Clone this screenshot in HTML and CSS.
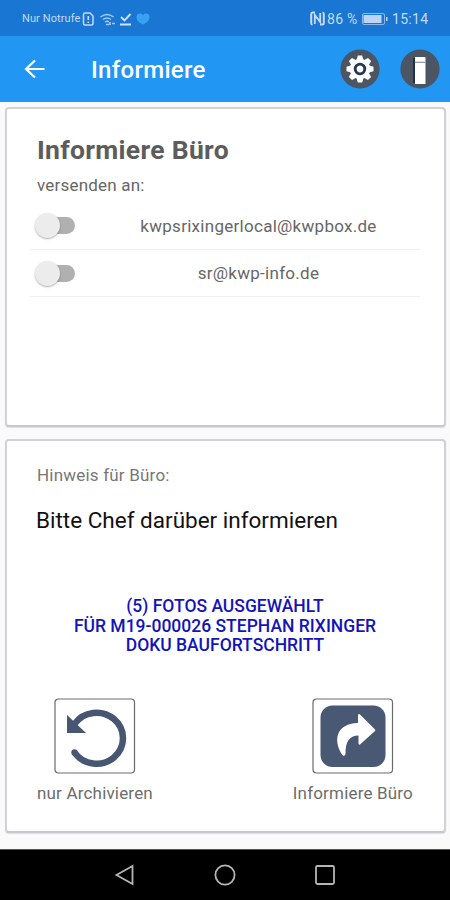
FILE: index.html
```
<!DOCTYPE html>
<html lang="de">
<head>
    <meta charset="UTF-8">
    <meta name="viewport" content="width=device-width, initial-scale=1.0">
    <title>Informiere Büro</title>
    <link rel="stylesheet" href="styles.css">
</head>
<body>
    <div class="statusbar">
        <span class="network">Nur Notrufe</span>
        <svg class="status-icons" width="70" height="16" viewBox="0 0 70 16">
            <path d="M4 2h5l3 3v7.500q0 1.500-1.500 1.500h-6.500q-1.500 0-1.500-1.500v-9q0-1.500 1.500-1.500z" fill="none" stroke="#c5daf3" stroke-width="1.500"/>
            <path d="M7.300 5v4M7.300 10.500v1.500" stroke="#c5daf3" stroke-width="1.600"/>
            <path d="M19.500 6q6.500-5 13 0M22 8.500q4-3 8 0M24 11q2-1.500 4 0" fill="none" stroke="#a9cbf0" stroke-width="1.400"/>
            <path d="M25 13.500h3M29 11v3M31 12.500h3" stroke="#a9cbf0" stroke-width="1.600"/>
            <path d="M40 6l3.500 3.500L49.500 3M39 13.500h11" fill="none" stroke="#d3e3f6" stroke-width="1.900"/>
            <path d="M62 13.500c-4-2-6.500-4-6.500-7.500 0-4 5-4.500 6.500-1.500 1.500-3 6.500-2.500 6.500 1.500 0 3.500-2.500 5.500-6.500 7.500z" fill="#3aa0f2"/>
        </svg>
        <svg class="nfc" width="15" height="15" viewBox="0 0 15 15">
            <path d="M5 1.500H2.500Q1.200 1.500 1.200 3v9q0 1.500 1.300 1.500M10 13.500h2.500q1.300 0 1.300-1.500V3q0-1.500-1.300-1.500" fill="none" stroke="#c5daf3" stroke-width="2"/>
            <path d="M4.800 13V4l5.400 7V2" fill="none" stroke="#c5daf3" stroke-width="1.800"/>
        </svg>
        <span class="percent">86 %</span>
        <svg class="battery" width="26" height="12" viewBox="0 0 26 12">
            <rect x="0.500" y="0.500" width="22" height="11" rx="1.500" fill="none" stroke="#8ab6e8"/>
            <rect x="1.500" y="2" width="18" height="8" fill="#bcd5f2"/>
            <rect x="24" y="4" width="1.500" height="4" fill="#bcd5f2"/>
        </svg>
        <span class="clock">15:14</span>
    </div>

    <header class="toolbar">
        <svg class="back" width="22" height="20" viewBox="0 0 22 20">
            <path d="M11 1.500L2 10l9 8.500M2 10h18.500" fill="none" stroke="#fff" stroke-width="2.200"/>
        </svg>
        <h1>Informiere</h1>
        <svg class="tool" width="40" height="40" viewBox="-20 -20 40 40">
            <circle r="19.600" fill="#4b5563"/>
            <g fill="#fff">
                <circle r="10.200"/>
                <path id="tooth" d="M-3.500-9l1.300-4.500h4.400L3.500-9v18l-1.300 4.500h-4.400L-3.500 9z"/>
                <use href="#tooth" transform="rotate(45)"/>
                <use href="#tooth" transform="rotate(90)"/>
                <use href="#tooth" transform="rotate(135)"/>
            </g>
            <circle r="4.800" fill="#fff" stroke="#26364e" stroke-width="2.800"/>
        </svg>
        <svg class="tool" width="40" height="40" viewBox="-20 -20 40 40">
            <circle r="19.600" fill="#4b5563"/>
            <path d="M-7-11h3v25h-3z" fill="#22314a"/>
            <path d="M-5-12h10.500v27H-5z" fill="#fff"/>
            <path d="M-5-6.700H5.500" stroke="#8b929c" stroke-width="1.200"/>
        </svg>
    </header>

    <main>
        <section class="card recipients">
            <h2>Informiere Büro</h2>
            <p class="label">versenden an:</p>
            <div class="row">
                <span class="switch"></span>
                <span class="mail">kwpsrixingerlocal@kwpbox.de</span>
            </div>
            <div class="row">
                <span class="switch"></span>
                <span class="mail">sr@kwp-info.de</span>
            </div>
        </section>

        <section class="card message">
            <p class="label hint">Hinweis für Büro:</p>
            <p class="note">Bitte Chef darüber informieren</p>
            <p class="photos">
                (5) FOTOS AUSGEWÄHLT<br>
                FÜR M19-000026 STEPHAN RIXINGER<br>
                DOKU BAUFORTSCHRITT
            </p>
            <div class="actions">
                <div class="action">
                    <svg width="82" height="76" viewBox="0 0 82 76">
                        <rect x="1" y="1" width="79.500" height="74" rx="3.500" fill="#fff" stroke="#6a6a6a" stroke-width="1.200"/>
                        <path d="M20.500 26A26.500 25.500 0 1 1 20.500 54.500" fill="none" stroke="#475772" stroke-width="6.500"/>
                        <circle cx="20.500" cy="54.500" r="3.200" fill="#475772"/>
                        <path d="M13 17L32 35H13z" fill="#475772"/>
                    </svg>
                    <span class="caption">nur Archivieren</span>
                </div>
                <div class="action">
                    <svg width="82" height="76" viewBox="0 0 82 76">
                        <rect x="1" y="1" width="79.500" height="74" rx="3.500" fill="#fff" stroke="#6a6a6a" stroke-width="1.200"/>
                        <rect x="8.500" y="7.500" width="65" height="61.500" rx="12" fill="#4a5973"/>
                        <path d="M46 16.500q1-1 2 0L63 31.500q.800.800 0 1.600L48 46.500q-1.500.500-1.500-1V37.500C37 37.500 33.500 44 33.500 56q-.500 2.500-2.700 1.500C21 44 23 25.500 46 25z" fill="#fff"/>
                    </svg>
                    <span class="caption">Informiere Büro</span>
                </div>
            </div>
        </section>
    </main>

    <nav class="navbar">
        <svg width="22" height="22" viewBox="0 0 22 22">
            <path d="M18.500 2v18L2.500 11z"/>
        </svg>
        <svg width="22" height="22" viewBox="0 0 22 22">
            <circle cx="11" cy="11" r="9.600"/>
        </svg>
        <svg width="22" height="22" viewBox="0 0 22 22">
            <rect x="2" y="2" width="18" height="18" rx="1.500"/>
        </svg>
    </nav>
</body>
</html>
```
FILE: styles.css
```
* {
    box-sizing: border-box;
}
body {
    font-family: Roboto, "Liberation Sans", sans-serif;
    background-color: #fafafa;
    color: #666;
    width: 450px;
    height: 900px;
    margin: 0;
    display: flex;
    flex-direction: column;
    overflow: hidden;
}
h1, h2, p {
    margin: 0;
    white-space: nowrap;
}
svg {
    display: block;
    flex-shrink: 0;
}

/* Statusleiste */
.statusbar {
    height: 36px;
    padding: 1px 21px 0 22px;
    background-color: #1976d2;
    color: #c5daf3;
    display: flex;
    align-items: center;
    white-space: nowrap;
}
.network {
    width: 58px;
    font-size: 11px;
    letter-spacing: 0.1px;
}
.status-icons {
    margin-left: 1px;
}
.nfc {
    margin-left: auto;
}
.percent {
    width: 32px;
    margin-left: 2px;
    font-size: 14px;
    letter-spacing: 0.3px;
}
.battery {
    margin-left: 3px;
}
.clock {
    width: 37px;
    margin-left: 4px;
    font-size: 14px;
    letter-spacing: 0.3px;
}

/* Kopfzeile */
.toolbar {
    height: 66px;
    padding: 0 10px 0 24px;
    background-color: #2196f3;
    color: #fff;
    display: flex;
    align-items: center;
}
.toolbar h1 {
    margin-left: 45px;
    margin-right: auto;
    padding-top: 2px;
    font-size: 24px;
    font-weight: 500;
    line-height: 30px;
    letter-spacing: 0.3px;
}
.tool + .tool {
    margin-left: 20px;
}

/* Karten */
main {
    flex: 1;
    padding: 5px 4px 0 5px;
}
.card {
    background-color: #fff;
    border: 2px solid #d2d2d6;
    border-bottom-color: #c8c8cc;
    border-radius: 4px;
    box-shadow: 0 1px 1px #ddd;
}
.recipients {
    height: 320px;
    padding: 25px 24px 0 23px;
}
.recipients h2 {
    padding-left: 7px;
    color: #5c5c5c;
    font-size: 26.5px;
    font-weight: 700;
    line-height: 32px;
    letter-spacing: 0.3px;
}
.label {
    padding-left: 7px;
    margin-top: 9px;
    font-size: 17px;
    line-height: 20px;
    letter-spacing: 0.2px;
}
.row {
    height: 47px;
    padding-left: 5px;
    border-bottom: 1px solid #efefef;
    display: flex;
    align-items: center;
}
.label + .row {
    margin-top: 7px;
    height: 48px;
}
.switch {
    width: 40px;
    height: 17px;
    border-radius: 9px;
    background: linear-gradient(to right, transparent 12px, #b0b0b0 12px);
    position: relative;
}
.switch::before {
    content: "";
    position: absolute;
    left: 0;
    top: -4px;
    width: 25px;
    height: 25px;
    border-radius: 50%;
    background-color: #ececec;
    box-shadow: 0 1px 2px rgba(0, 0, 0, 0.3);
}
.mail {
    flex: 1;
    padding-left: 22px;
    font-size: 17px;
    letter-spacing: 0.28px;
    text-align: center;
}

.message {
    height: 394px;
    margin-top: 12px;
    padding: 24px 31px 0 23px;
}
.hint {
    margin-top: 0;
    color: #777;
}
.note {
    padding-left: 6px;
    margin-top: 21px;
    color: #111;
    font-size: 22.5px;
    line-height: 28px;
}
.photos {
    margin-top: 63px;
    padding-left: 7px;
    color: #1414b8;
    font-size: 17.5px;
    font-weight: 500;
    line-height: 19.5px;
    text-align: center;
}
.actions {
    margin-top: 42.5px;
    padding-left: 7px;
    display: flex;
    justify-content: space-between;
}
.action {
    display: flex;
    flex-direction: column;
    align-items: center;
}
.caption {
    margin-top: 8px;
    color: #6c6c6c;
    font-size: 17px;
    line-height: 22px;
    letter-spacing: 0.18px;
}

/* Navigationsleiste */
.navbar {
    height: 51px;
    border-top: 1px solid #555;
    background-color: #000;
    display: flex;
    justify-content: center;
    align-items: center;
    gap: 78px;
}
.navbar svg {
    fill: none;
    stroke: #b5b5b5;
    stroke-width: 1.8;
}
```
